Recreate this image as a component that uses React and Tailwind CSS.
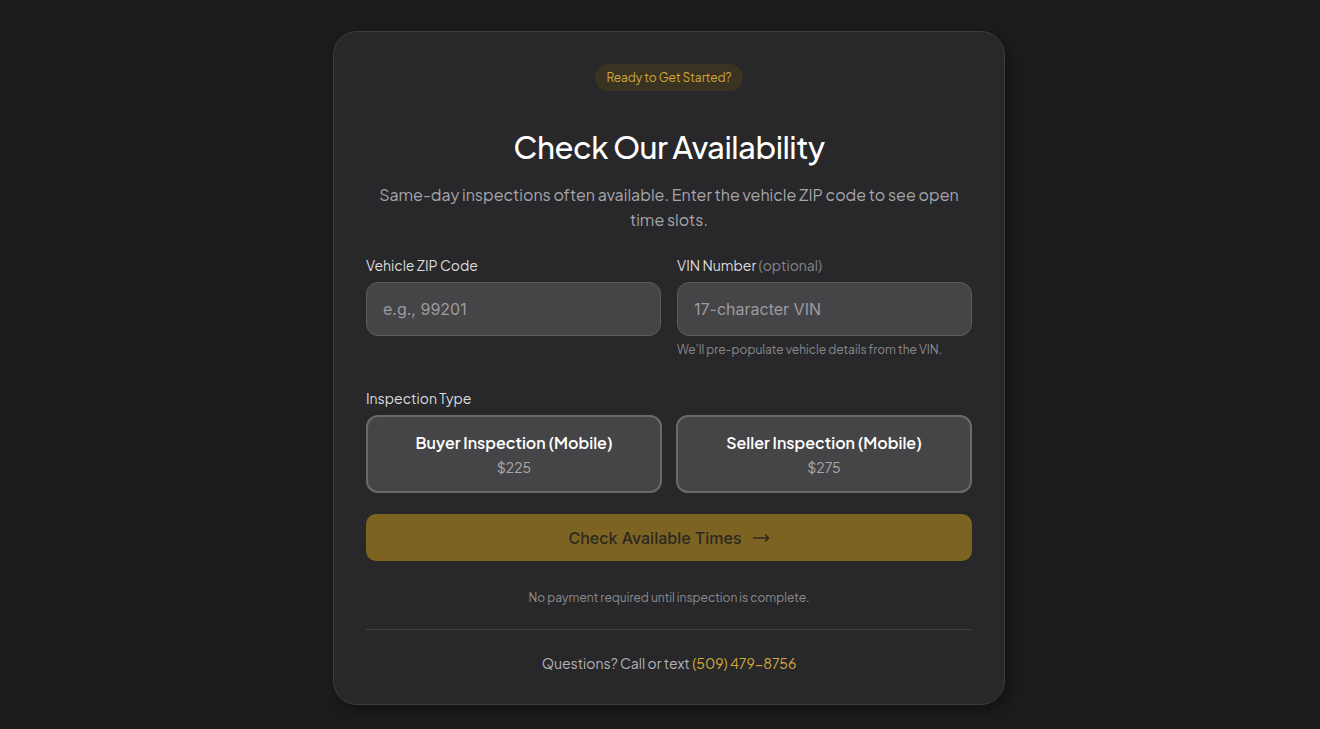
import { MoveRight } from 'lucide-react';

const font = { fontFamily: '"Plus Jakarta Sans", Inter, "Noto Sans", sans-serif' };

function TypeCard({ title, price }) {
  return (
    <button
      type="button"
      className="h-[78px] rounded-xl border-2 border-[#6a6a6d] bg-[#454547] flex flex-col items-center justify-center"
    >
      <span className="text-[16px] font-semibold text-white leading-6">{title}</span>
      <span className="text-[14px] text-[#a9a9ad] leading-5 mt-[2px]">{price}</span>
    </button>
  );
}

export default function App() {
  return (
    <div
      className="min-h-screen bg-[#1c1c1d] flex justify-center pt-[31px] pb-6 pl-[18px]"
      style={font}
    >
      <div className="w-[672px] h-[674px] rounded-[24px] border border-[#3c3c3f] bg-[#28282a] px-8 pt-8 shadow-[4px_6px_14px_rgba(0,0,0,0.35)]">
        <div className="flex justify-center">
          <span className="h-[27px] px-[11px] rounded-full bg-[#3a3322] text-[#d1a83a] text-[12px] flex items-center">
            Ready to Get Started?
          </span>
        </div>

        <h1 className="mt-[37px] text-center text-[31px] leading-[38px] font-medium text-white tracking-[-0.5px]">
          Check Our Availability
        </h1>
        <p className="mt-[16px] mx-auto max-w-[590px] text-center text-[16px] leading-[25px] text-[#a6a6aa]">
          Same-day inspections often available. Enter the vehicle ZIP code to see open time slots.
        </p>

        <div className="mt-[23px] grid grid-cols-2 gap-4">
          <div>
            <label className="block text-[14px] leading-5 text-[#dcdcdf]">
              Vehicle ZIP Code
            </label>
            <input
              placeholder="e.g., 99201"
              className="mt-[7px] w-full h-[54px] rounded-xl border border-[#5c5c5f] bg-[#454547] px-4 text-[16px] text-white placeholder:text-[#9c9ca0] outline-none"
              style={{ fontFamily: 'Inter, sans-serif' }}
            />
          </div>
          <div>
            <label className="block text-[14px] leading-5 text-[#dcdcdf]">
              VIN Number <span className="text-[#858589]">(optional)</span>
            </label>
            <input
              placeholder="17-character VIN"
              className="mt-[7px] w-full h-[54px] rounded-xl border border-[#5c5c5f] bg-[#454547] px-4 text-[16px] text-white placeholder:text-[#9c9ca0] outline-none"
              style={{ fontFamily: 'Inter, sans-serif' }}
            />
            <p className="mt-[6px] text-[12px] leading-4 text-[#88888c]">
              We'll pre-populate vehicle details from the VIN.
            </p>
          </div>
        </div>

        <div className="mt-[30px]">
          <label className="block text-[14px] leading-5 text-[#dcdcdf]">
            Inspection Type
          </label>
          <div className="mt-[7px] grid grid-cols-2 gap-[14px]">
            <TypeCard title="Buyer Inspection (Mobile)" price="$225" />
            <TypeCard title="Seller Inspection (Mobile)" price="$275" />
          </div>
        </div>

        <button
          type="button"
          className="mt-[21px] w-full h-[47px] rounded-[10px] bg-[#7d6322] text-[#2b2820] text-[16px] font-medium flex items-center justify-center gap-[10px]"
          style={{ fontFamily: 'Inter, sans-serif' }}
        >
          Check Available Times
          <MoveRight size={18} strokeWidth={2} />
        </button>

        <p className="mt-[29px] text-center text-[12px] leading-4 text-[#8c8c90]">
          No payment required until inspection is complete.
        </p>

        <div className="mt-[23px] border-t border-[#414144]" />

        <p className="mt-[23px] text-center text-[14px] leading-5 text-[#b3b3b7]">
          Questions? Call or text <span className="text-[#d1a83a]">(509) 479-8756</span>
        </p>
      </div>
    </div>
  );
}
